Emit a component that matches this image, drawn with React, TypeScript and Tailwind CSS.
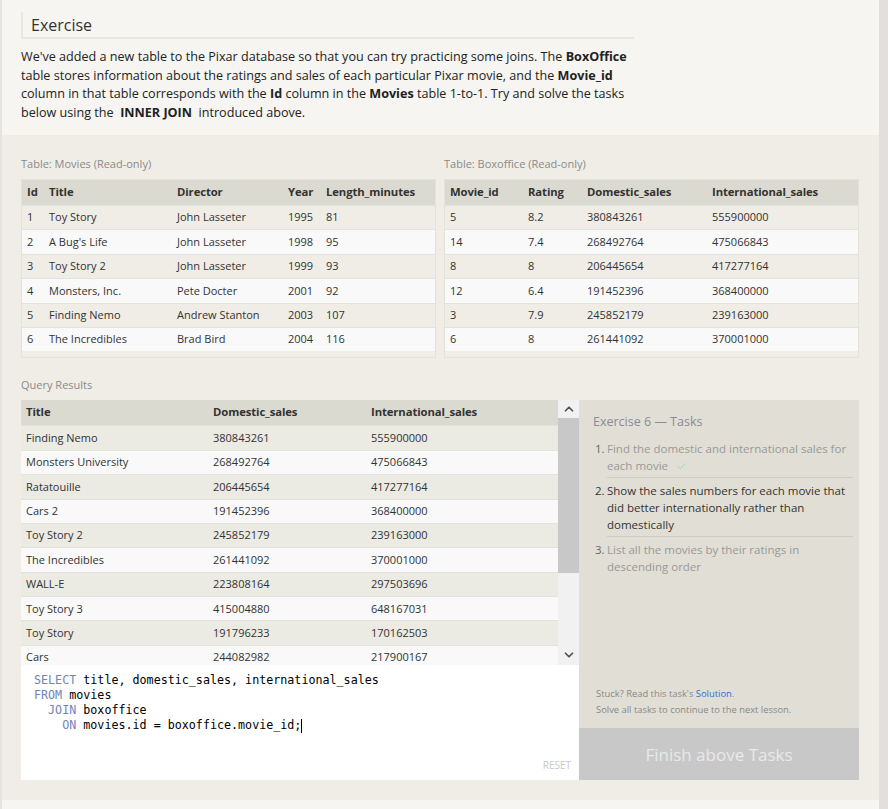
import { ChevronUp, ChevronDown, Check } from "lucide-react";

/* ---------------- data ---------------- */
const movies = [
  ["1", "Toy Story", "John Lasseter", "1995", "81"],
  ["2", "A Bug's Life", "John Lasseter", "1998", "95"],
  ["3", "Toy Story 2", "John Lasseter", "1999", "93"],
  ["4", "Monsters, Inc.", "Pete Docter", "2001", "92"],
  ["5", "Finding Nemo", "Andrew Stanton", "2003", "107"],
  ["6", "The Incredibles", "Brad Bird", "2004", "116"],
];

const boxoffice = [
  ["5", "8.2", "380843261", "555900000"],
  ["14", "7.4", "268492764", "475066843"],
  ["8", "8", "206445654", "417277164"],
  ["12", "6.4", "191452396", "368400000"],
  ["3", "7.9", "245852179", "239163000"],
  ["6", "8", "261441092", "370001000"],
];

const results = [
  ["Finding Nemo", "380843261", "555900000"],
  ["Monsters University", "268492764", "475066843"],
  ["Ratatouille", "206445654", "417277164"],
  ["Cars 2", "191452396", "368400000"],
  ["Toy Story 2", "245852179", "239163000"],
  ["The Incredibles", "261441092", "370001000"],
  ["WALL-E", "223808164", "297503696"],
  ["Toy Story 3", "415004880", "648167031"],
  ["Toy Story", "191796233", "170162503"],
  ["Cars", "244082982", "217900167"],
];

/* ---------------- small table ---------------- */
const DataTable = ({
  label,
  headers,
  rows,
  cols,
}: {
  label: string;
  headers: string[];
  rows: string[][];
  cols: string;
}) => (
  <div className="flex flex-col">
    <p className="text-[11px] leading-[14px] text-[#8a8a8a] mb-[8px]">{label}</p>
    <div className="border border-[#e4e2da] pb-[6px]">
      <div className={`grid ${cols} h-[25px] items-center bg-[#dbdad0] text-[11.3px] tracking-[-0.1px] font-bold text-[#333]`}>
        {headers.map((h) => (
          <span key={h} className="pl-[5px] whitespace-nowrap">{h}</span>
        ))}
      </div>
      {rows.map((r, i) => (
        <div
          key={i}
          className={`grid ${cols} h-[24.4px] items-center text-[11px] text-[#333] border-t border-[#e3e2db] ${
            i % 2 === 0 ? "bg-[#efede6]" : "bg-[#f9f9f9]"
          }`}
        >
          {r.map((c, j) => (
            <span key={j} className="pl-[5px] whitespace-nowrap">{c}</span>
          ))}
        </div>
      ))}
    </div>
  </div>
);

/* ---------------- task item ---------------- */
const Task = ({ n, children, active, last }: { n: number; children: React.ReactNode; active?: boolean; last?: boolean }) => (
  <li className="flex text-[11.5px] leading-[17px] pl-[2px]">
    <span className={`w-[12px] shrink-0 ${active ? "text-[#333]" : "text-[#666]"}`}>{n}.</span>
    <div
      className={`flex-1 pb-[3px] mb-[4px] ${last ? "" : "border-b border-[#cfcdc3]"} ${
        active ? "text-[#333]" : "text-[#999]"
      }`}
    >
      {children}
    </div>
  </li>
);

const KW = ({ children }: { children: React.ReactNode }) => <span className="text-[#7183bb]">{children}</span>;

export default function App() {
  return (
    <div
      className="w-[888px] h-[809px] overflow-hidden flex bg-[#e3dfdc]"
      style={{ fontFamily: '"Open Sans", "Noto Sans", sans-serif' }}
    >
      <div className="w-[2px] bg-[#e6e2dd]" />
      <div className="w-[877px] flex flex-col">
        {/* ── intro ── */}
        <section className="bg-[#f6f5f1] px-[19px] pt-[12px] pb-[13px]">
          <div className="w-[613px] h-[27px] flex items-center border-l-2 border-b-2 border-[#e9e7df] pl-[8px]">
            <h2 className="text-[16px] text-[#333]">Exercise</h2>
          </div>
          <p className="w-[640px] mt-[9px] text-[12.6px] leading-[18.5px] text-[#222] whitespace-nowrap">
            We've added a new table to the Pixar database so that you can try practicing some joins. The{" "}
            <b>BoxOffice</b>
            <br />
            table stores information about the ratings and sales of each particular Pixar movie, and the{" "}
            <b>Movie_id</b>
            <br />
            column in that table corresponds with the <b>Id</b> column in the <b>Movies</b> table 1-to-1. Try and
            solve the tasks
            <br />
            below using the&nbsp; <b>INNER JOIN</b>&nbsp; introduced above.
          </p>
        </section>

        {/* ── workspace ── */}
        <section className="bg-[#efede6] pl-[19px] pr-[20px] pt-[22px] pb-[20px] flex-1">
          <div className="grid grid-cols-2 gap-[8px]">
            <DataTable
              label="Table: Movies (Read-only)"
              headers={["Id", "Title", "Director", "Year", "Length_minutes"]}
              rows={movies}
              cols="grid-cols-[22px_128px_111px_38px_1fr]"
            />
            <DataTable
              label="Table: Boxoffice (Read-only)"
              headers={["Movie_id", "Rating", "Domestic_sales", "International_sales"]}
              rows={boxoffice}
              cols="grid-cols-[78px_59px_125px_1fr]"
            />
          </div>

          <p className="text-[11px] leading-[14px] text-[#8a8a8a] mt-[20px] mb-[8px]">Query Results</p>

          <div className="flex">
            {/* results + editor */}
            <div className="w-[558px] flex flex-col">
              <div className="h-[265px] flex overflow-hidden">
                <div className="w-[537px]">
                  <div className="grid grid-cols-[187px_158px_1fr] h-[25px] items-center bg-[#dbdad0] text-[11.3px] tracking-[-0.1px] font-bold text-[#333]">
                    <span className="pl-[5px]">Title</span>
                    <span className="pl-[5px]">Domestic_sales</span>
                    <span className="pl-[5px]">International_sales</span>
                  </div>
                  {results.map((r, i) => (
                    <div
                      key={i}
                      className={`grid grid-cols-[187px_158px_1fr] h-[24.4px] items-center text-[11px] text-[#333] border-t border-[#e3e2db] ${
                        i % 2 === 0 ? "bg-[#ebeae3]" : "bg-[#f9f9f9]"
                      }`}
                    >
                      {r.map((c, j) => (
                        <span key={j} className="pl-[5px] whitespace-nowrap">{c}</span>
                      ))}
                    </div>
                  ))}
                </div>
                {/* scrollbar */}
                <div className="w-[21px] bg-[#f1f1f1] flex flex-col">
                  <div className="h-[18px] flex items-center justify-center">
                    <ChevronUp size={14} strokeWidth={3} className="text-[#505050]" />
                  </div>
                  <div className="h-[155px] bg-[#c8c8c8]" />
                  <div className="flex-1 flex items-end justify-center pb-[3px]">
                    <ChevronDown size={14} strokeWidth={3} className="text-[#505050]" />
                  </div>
                </div>
              </div>

              <div className="relative h-[115px] bg-white pl-[13px] pt-[8px]">
                <pre
                  className="text-[11.7px] leading-[15px] text-black"
                  style={{ fontFamily: '"DejaVu Sans Mono", "Liberation Mono", monospace' }}
                >
                  <KW>SELECT</KW> title, domestic_sales, international_sales{"\n"}
                  <KW>FROM</KW> movies{"\n"}
                  {"  "}
                  <KW>JOIN</KW> boxoffice{"\n"}
                  {"    "}
                  <KW>ON</KW> movies.id = boxoffice.movie_id;
                  <span className="inline-block w-px h-[14px] bg-black align-middle" />
                </pre>
                <span className="absolute right-[8px] bottom-[7px] text-[10px] text-[#c8c8c8]">RESET</span>
              </div>
            </div>

            {/* tasks panel */}
            <div className="w-[280px] h-[380px] bg-[#e1dfd5] flex flex-col">
              <div className="flex-1 flex flex-col pl-[14px] pr-[6px] pt-[13px]">
                <h3 className="text-[12.5px] leading-[18px] text-[#8a8a99]">Exercise 6 — Tasks</h3>
                <ol className="mt-[9px]">
                  <Task n={1}>
                    Find the domestic and international sales for each movie
                    <Check size={11} strokeWidth={1.5} className="inline-block ml-[8px] -mt-[2px] text-[#8fd08f]" />
                  </Task>
                  <Task n={2} active>
                    Show the sales numbers for each movie that did better internationally rather than domestically
                  </Task>
                  <Task n={3} last>
                    List all the movies by their ratings in descending order
                  </Task>
                </ol>
                <div className="mt-auto mb-[10px] pl-[3px] text-[9.4px] leading-[16px] text-[#888]">
                  <p>
                    Stuck? Read this task's <span className="text-[#1f6fd8]">Solution</span>.
                  </p>
                  <p>Solve all tasks to continue to the next lesson.</p>
                </div>
              </div>
              <button className="h-[52px] bg-[#c8c8c8] text-[17px] text-[#e9e9e9]">Finish above Tasks</button>
            </div>
          </div>
        </section>

        <div className="h-[9px] bg-[#f6f5f1]" />
      </div>
      <div className="flex-1 bg-[#e3dfdc]" />
    </div>
  );
}
